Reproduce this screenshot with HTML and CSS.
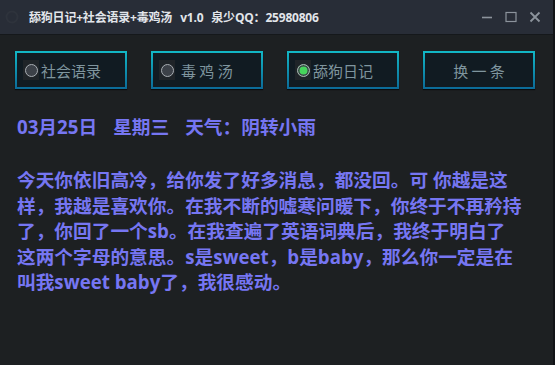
FILE: index.html
```html
<!DOCTYPE html>
<html lang="zh">
<head>
<meta charset="utf-8">
<title>舔狗日记</title>
<link rel="stylesheet" href="styles.css">
</head>
<body>
<div class="window">
  <header class="titlebar">
    <svg class="app-icon" width="14" height="14" viewBox="0 0 14 14"><circle cx="7" cy="7" r="5.5" fill="none" stroke="#2e333c" stroke-width="2"/></svg>
    <span class="title">舔狗日记+社会语录+毒鸡汤<span class="tgap"></span>v1.0<span class="tgap"></span>泉少QQ：25980806</span>
    <div class="controls">
      <svg width="12" height="12" viewBox="0 0 12 12"><path d="M1 6.5h10" stroke="#8c939c" stroke-width="1.6"/></svg>
      <svg width="12" height="12" viewBox="0 0 12 12"><rect x="1" y="1.5" width="10" height="9" fill="none" stroke="#8c939c" stroke-width="1.2"/></svg>
      <svg width="12" height="12" viewBox="0 0 12 12"><path d="M1.5 1.5l9 9M10.5 1.5l-9 9" stroke="#8c939c" stroke-width="1.8"/></svg>
    </div>
  </header>
  <main class="content">
    <div class="toolbar">
      <label class="btn"><span class="radio-box"><span class="radio"></span></span><span class="label">社会语录</span></label>
      <label class="btn"><span class="radio-box"><span class="radio"></span></span><span class="label spaced">毒 鸡 汤</span></label>
      <label class="btn"><span class="radio-box"><span class="radio checked"></span></span><span class="label">舔狗日记</span></label>
      <button class="btn center"><span class="label">换 一 条</span></button>
    </div>
    <p class="date">03月25日<span class="gap"></span>星期三<span class="gap"></span>天气：阴转小雨</p>
    <p class="text">今天你依旧高冷，给你发了好多消息，都没回。可 你越是这样，我越是喜欢你。在我不断的嘘寒问暖下，你终于不再矜持了，你回了一个sb。在我查遍了英语词典后，我终于明白了这两个字母的意思。s是sweet，b是baby，那么你一定是在叫我sweet baby了，我很感动。</p>
  </main>
</div>
</body>
</html>
```

FILE: styles.css
```css
* { box-sizing: border-box; }
html, body {
  margin: 0;
  padding: 0;
  width: 555px;
  height: 365px;
  overflow: hidden;
  background: #1d2022;
  font-family: "Open Sans", "Noto Sans CJK SC", sans-serif;
}
.window {
  width: 555px;
  height: 365px;
  display: flex;
  flex-direction: column;
  border-right: 2px solid #111316;
  background: #1d2022;
}
.titlebar {
  height: 35px;
  flex: none;
  display: flex;
  align-items: center;
  background: #282d37;
  border-bottom: 1px solid #15181b;
  padding-left: 5px;
}
.app-icon { flex: none; }
.title {
  margin-left: 10px;
  color: #e2e5ea;
  font-size: 12px;
  font-weight: 700;
  white-space: nowrap;
  letter-spacing: -0.2px;
}
.tgap { display: inline-block; width: 8px; }
.controls {
  margin-left: auto;
  display: flex;
  gap: 12px;
  padding-right: 12px;
}
.content {
  flex: 1;
  padding: 16px 16px 0 15px;
}
.toolbar {
  display: flex;
  gap: 24px;
}
.btn {
  width: 112px;
  height: 38px;
  display: flex;
  align-items: center;
  padding: 0 0 0 6px;
  border: 2px solid transparent;
  background:
    linear-gradient(#111b22, #111b22) padding-box,
    linear-gradient(#12b8c6, #0b6a98) border-box;
  box-shadow: 0 1px 1px rgba(0,0,0,0.6);
  font-family: inherit;
  cursor: pointer;
}
.btn.center { justify-content: center; padding: 0; }
.radio-box {
  width: 16px;
  height: 20px;
  display: flex;
  align-items: center;
  justify-content: center;
  background: #1f2428;
}
.radio {
  width: 13px;
  height: 13px;
  border-radius: 50%;
  border: 1.5px solid #a9aeb3;
  background: #3c4148;
}
.radio.checked {
  background: #46d45c;
  box-shadow: inset 0 0 0 1.5px #3c4148;
}
.label {
  color: #7f959e;
  font-size: 15px;
  line-height: 1;
  margin-left: 2px;
  font-family: "Noto Sans CJK SC", sans-serif;
}
.label.spaced { margin-left: 6px; }
.btn.center .label { margin-left: 0; }
.date {
  margin: 26px 0 0 2px;
  color: #7676f2;
  font-size: 18.7px;
  font-weight: 700;
  line-height: 24px;
}
.gap { display: inline-block; width: 16px; }
.text {
  margin: 28px 0 0 2px;
  color: #7676f2;
  font-size: 18.7px;
  font-weight: 700;
  line-height: 25.5px;
  width: 506px;
}
```
